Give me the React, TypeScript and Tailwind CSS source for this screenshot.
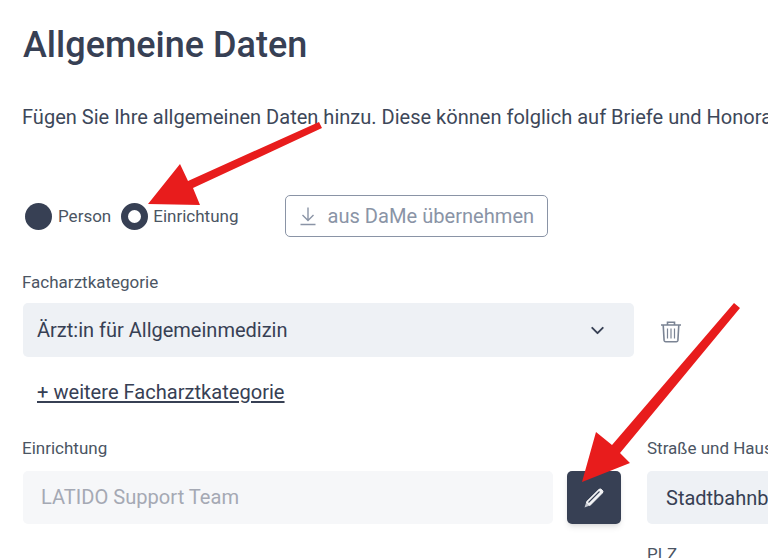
import { ChevronDown } from 'lucide-react';

function Arrows() {
  return (
    <svg className="absolute inset-0 pointer-events-none" width="768" height="558" viewBox="0 0 768 558">
      <polygon
        fill="#e81c1c"
        points="319,122 322,128 193,188 200,205 148,204 180,164 188,181"
      />
      <polygon
        fill="#e81c1c"
        points="734,303 740,308 620,453 630,463 582,482 596,432 612,445"
      />
    </svg>
  );
}

function DownloadIcon() {
  return (
    <svg width="18" height="20" viewBox="0 0 18 20" fill="none" stroke="currentColor" strokeWidth="1.4">
      <path d="M9 1.5V14M3.5 9 9 14.5 14.5 9M1.5 18.5h15" />
    </svg>
  );
}

function TrashIcon() {
  return (
    <svg className="ml-[26px] mt-[3px] text-[#7b8494]" width="22" height="23" viewBox="0 0 22 23" fill="none" stroke="currentColor" strokeWidth="1.6">
      <path d="M1 5h20M7.5 5V2.2h7V5M3.2 5l.9 15.4a1.6 1.6 0 0 0 1.6 1.4h10.6a1.6 1.6 0 0 0 1.6-1.4L18.8 5" />
      <path d="M7.5 8.5v10M11 8.5v10M14.5 8.5v10" strokeWidth="1.2" />
    </svg>
  );
}

function PencilIcon() {
  return (
    <svg width="24" height="24" viewBox="0 0 24 24" fill="none">
      <path d="M2.5 21.5 4.3 16 7.8 19.6Z" fill="#c4c8d0" />
      <path
        d="M4.3 16 16.8 3.6a2 2 0 0 1 2.8 0l.7.7a2 2 0 0 1 0 2.8L7.8 19.6Z"
        fill="#f3f4f6"
        stroke="#ffffff"
        strokeWidth="1"
      />
      <path d="M6.5 16.5 17.5 5.5" stroke="#374054" strokeWidth="1.1" />
    </svg>
  );
}

export default function App() {
  return (
    <div className="relative w-[768px] h-[558px] overflow-hidden bg-white text-[#374151] font-['Roboto',sans-serif]">
      <div className="w-[1200px] pl-[23px] pt-[23px]">
        <h1 className="text-[36px] leading-[44px] font-medium text-[#374054]">Allgemeine Daten</h1>
        <p className="mt-[37px] -ml-px text-[20.05px] leading-[26px] text-[#3d4759] whitespace-nowrap">
          Fügen Sie Ihre allgemeinen Daten hinzu. Diese können folglich auf Briefe und Honorarnoten übernommen werden.
        </p>

        <div className="mt-[65px] flex items-center h-[42px]">
          <div className="flex items-center ml-[2px]">
            <span className="w-[27px] h-[27px] rounded-full bg-[#374054]" />
            <span className="ml-[6px] pt-px text-[17px] text-[#4b5563]">Person</span>
          </div>
          <div className="flex items-center ml-[10px]">
            <span className="w-[27px] h-[27px] rounded-full border-[7px] border-[#374054] bg-white" />
            <span className="ml-[5px] pt-px text-[17px] text-[#4b5563]">Einrichtung</span>
          </div>
          <button className="ml-[47px] w-[263px] h-[42px] flex items-center pl-[13px] gap-[10px] rounded-[5px] border border-[#8a94a6] text-[#8a94a6] text-[20.1px]">
            <DownloadIcon />
            aus DaMe übernehmen
          </button>
        </div>

        <label className="block mt-[35px] -ml-px text-[17px] leading-[20px] text-[#4b5563]">Facharztkategorie</label>
        <div className="mt-[11px] flex items-center">
          <div className="w-[611px] h-[54px] rounded-[5px] bg-[#eef1f5] pl-[14px] pr-[26px] flex items-center justify-between text-[20px] text-[#374054]">
            Ärzt:in für Allgemeinmedizin
            <ChevronDown size={21} strokeWidth={2.2} />
          </div>
          <TrashIcon />
        </div>

        <button className="block mt-[22px] ml-[14px] text-[20.1px] leading-[26px] text-[#374054] underline underline-offset-2">
          + weitere Facharztkategorie
        </button>

        <div className="mt-[33px] flex items-start">
          <div>
            <label className="block -ml-px text-[17px] leading-[20px] text-[#4b5563]">Einrichtung</label>
            <div className="mt-[13px] flex">
              <div className="w-[530px] h-[53px] rounded-[5px] bg-[#f6f7f9] pl-[18px] flex items-center text-[20.1px] text-[#a5a9b4]">
                LATIDO Support Team
              </div>
              <button className="ml-[14px] w-[54px] h-[53px] rounded-[5px] bg-[#374054] flex items-center justify-center text-white shadow-md">
                <PencilIcon />
              </button>
            </div>
          </div>
          <div className="ml-[26px]">
            <label className="block text-[17px] leading-[20px] text-[#4b5563] whitespace-nowrap">Straße und Hausnummer</label>
            <div className="mt-[13px] w-[400px] h-[53px] rounded-[5px] bg-[#eef1f5] pl-[19px] flex items-center text-[20px] text-[#374054]">
              Stadtbahnbogen 1
            </div>
            <label className="block mt-[20px] text-[17px] leading-[20px] text-[#4b5563]">PLZ</label>
          </div>
        </div>
      </div>
      <Arrows />
    </div>
  );
}
